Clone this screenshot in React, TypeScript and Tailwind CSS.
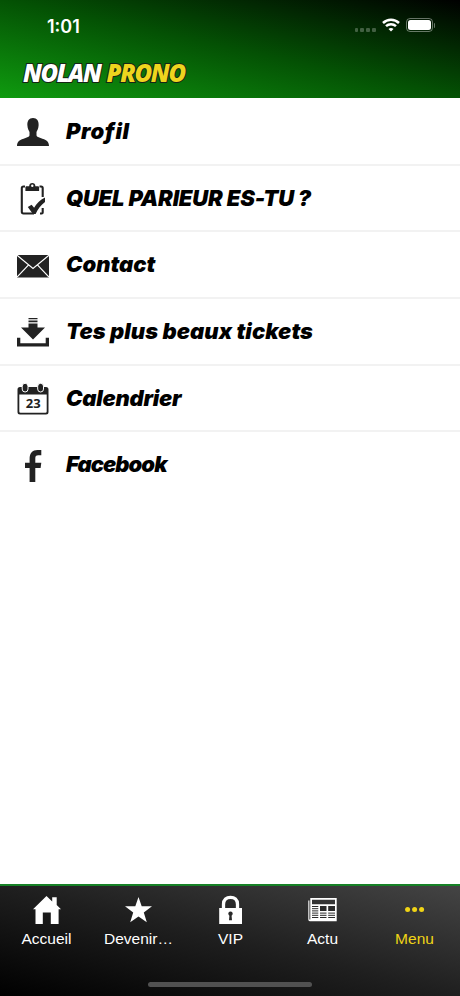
import React from 'react';

interface MenuEntry {
  label: string;
  icon: React.ReactNode;
  textClass: string;
}

interface TabEntry {
  label: string;
  icon: React.ReactNode;
  active?: boolean;
}

const menuEntries: MenuEntry[] = [
  {
    label: 'Profil',
    textClass: 'tracking-[0.6px]',
    icon: (
      <path d="M16 2c4 0 6 3 5.600 7.500-.2 3.500-1.400 5-2.100 6.500v3.200c0 1.300 1.200 1.800 4 2.700 5.300 1.700 8.500 3.100 8.500 8.100H0c0-5 3.200-6.400 8.500-8.100 2.800-.9 4-1.400 4-2.700V16c-.7-1.500-1.900-3-2.100-6.500C10 5 12 2 16 2z" />
    ),
  },
  {
    label: 'QUEL PARIEUR ES-TU ?',
    textClass: 'tracking-[-0.18px]',
    icon: (
      <>
        <path d="M8 3.500H6.500q-1.700 0-1.700 1.700v23.600q0 1.700 1.700 1.700H17M22.500 3.500H24q1.700 0 1.700 1.700V14M25.700 25v4.500q0 1-1 1H23" fill="none" stroke="currentColor" strokeWidth="2.100" />
        <path fillRule="evenodd" d="M12.200 3.200C12.200 1.200 13.500 0 15.300 0s3.100 1.200 3.100 3.200h2.500c.8 0 1.200.6 1.200 1.300V8H8.400V4.500c0-.7.400-1.300 1.200-1.300zM15.300 1.600a1.200 1.200 0 100 2.400 1.200 1.200 0 000-2.400z" />
        <path d="M10.800 24l3.800-2.200 2.500 2.900C19.500 20.300 23 16.800 28 14.400v4.500C24 22 20.800 26 18.600 31h-2.700z" />
      </>
    ),
  },
  {
    label: 'Contact',
    textClass: 'tracking-[0px]',
    icon: (
      <>
        <path d="M0 5h32v22.500H0z" />
        <path d="M0 5.300l16 13.200L32 5.300M0 27.200l11.600-12.300M32 27.200L20.400 14.900" fill="none" stroke="white" strokeWidth="1.200" />
      </>
    ),
  },
  {
    label: 'Tes plus beaux tickets',
    textClass: 'tracking-[0.04px]',
    icon: (
      <>
        <path d="M11.500 2h9v1.300h-9zM11.500 4.500h9v1.700h-9zM11.500 7.500h9v4H28L16 23.500 4 11.500h7.500z" />
        <path d="M0 21.700h3.300v5.600h25.400v-5.600H32v8.800H0z" />
      </>
    ),
  },
  {
    label: 'Calendrier',
    textClass: 'tracking-[-0.25px]',
    icon: (
      <>
        <path fillRule="evenodd" d="M3 4h26q2.500 0 2.500 2.500V29q0 2.500-2.500 2.500H3Q.5 31.500.5 29V6.500Q.5 4 3 4zM2.300 11.500V28.500q0 1.200 1.200 1.200h25q1.200 0 1.200-1.200v-17z" />
        <rect x="5.200" y=".3" width="5.800" height="8.700" rx="2.900" stroke="white" />
        <rect x="20.700" y=".3" width="5.800" height="8.700" rx="2.900" stroke="white" />
        <text x="16.200" y="25.400" textAnchor="middle" className="font-['Open_Sans'] text-[13px] font-bold">23</text>
      </>
    ),
  },
  {
    label: 'Facebook',
    textClass: 'tracking-[-0.95px]',
    icon: (
      <path d="M12.600 32V18H8v-5.200h4.600V9C12.600 3 15.500 0 20.500 0H24.300v5.200h-3c-2.300 0-3 1-3 3.200v4.400h6l-.7 5.200h-5.300v14z" />
    ),
  },
];

const tabEntries: TabEntry[] = [
  {
    label: 'Accueil',
    icon: <path d="M14.500 2L1 15.300h2.500V30h7.300V18.500h8V30h7.800V15.300H29l-4.300-4.200V3.200h-4.500v4.400z" />,
  },
  {
    label: 'Devenir…',
    icon: <path d="M14.500 3l3.200 9.200H28l-8.200 6.300 3 9.800-8.300-5.800-8.300 5.800 3-9.800L1 12.200h10.300z" />,
  },
  {
    label: 'VIP',
    icon: (
      <>
        <path d="M7.500 15V10.200C7.500 5.500 10.500 3.300 14.500 3.300s7 2.200 7 6.900V15" fill="none" stroke="currentColor" strokeWidth="3.300" />
        <path fillRule="evenodd" d="M3.200 14H26v16H3.200zM14.500 17.500a2.200 2.200 0 00-1.900 3.300l.8.900-.4 4.600h3l-.4-4.600.8-.9a2.200 2.200 0 00-1.900-3.300z" />
      </>
    ),
  },
  {
    label: 'Actu',
    icon: (
      <>
        <path fillRule="evenodd" d="M2.300 4h26.400v23.300H1.800Q.3 27.300.3 25.500V6.500h1.100v19h.9zM4 5.700v4.500h23V5.700z" />
        <path d="M4 12.500h6.300M4 14.700h6.300M4 16.900h6.300M4 19.100h6.300M4 21.300h6.300M4 23.500h6.300M12 19.100h6.500M12 21.300h6.500M12 23.500h6.500M20.200 19.100H27M20.200 21.300H27M20.200 23.500H27" stroke="#2a2a2a" strokeWidth="1" />
        <path d="M12 12h6.500v5H12zM20.200 12H27v5h-6.800z" fill="#2a2a2a" />
      </>
    ),
  },
  {
    label: 'Menu',
    active: true,
    icon: (
      <>
        <circle cx="7.600" cy="15.500" r="2.500" />
        <circle cx="14.600" cy="15.500" r="2.500" />
        <circle cx="21.600" cy="15.500" r="2.500" />
      </>
    ),
  },
];

const StatusIcons: React.FC = () => (
  <div className="flex items-center text-white">
    <div className="mt-[9px] mr-[6px] flex gap-[2px] opacity-25">
      <span className="h-1 w-[3.700px] rounded-[1px] bg-white" />
      <span className="h-1 w-[3.700px] rounded-[1px] bg-white" />
      <span className="h-1 w-[3.700px] rounded-[1px] bg-white" />
      <span className="h-1 w-[3.700px] rounded-[1px] bg-white" />
    </div>
    <svg width="18" height="14" viewBox="0 0 18 14" fill="none" stroke="currentColor" strokeWidth="2.500">
      <path d="M1 5C5.500.6 12.500.6 17 5M4 8.200c2.800-2.700 7.200-2.700 10 0" />
      <path d="M9 13.500l-2.500-2.600c1.400-1.300 3.600-1.300 5 0z" fill="currentColor" stroke="none" />
    </svg>
    <div className="ml-[6px] h-[14px] w-[27px] rounded-[4px] border border-white/40 p-px">
      <div className="h-full w-full rounded-[2.500px] bg-white" />
    </div>
    <span className="ml-px h-[5px] w-[1.500px] rounded-r bg-white/40" />
  </div>
);

export default function App() {
  return (
    <div className="flex h-[996px] w-[460px] flex-col overflow-hidden bg-white">
      <header className="h-[98px] bg-linear-to-tr/srgb from-[#0f9b0f] via-[#045204] to-black">
        <div className="flex h-[50px] items-center justify-between pr-[25px] pl-[47px]">
          <span className="mt-[2px] font-['Inter'] text-[18px] font-semibold text-white">1:01</span>
          <StatusIcons />
        </div>
        <h1 className="mt-[7px] flex gap-[6px] pl-[23px] font-['Open_Sans',sans-serif] text-[24px] leading-[32px] font-extrabold whitespace-nowrap text-white italic [-webkit-text-stroke:2px_#152515] [paint-order:stroke_fill]">
          <span className="tracking-[-1.400px]">NOLAN</span>
          <span className="tracking-[-1.300px] text-[#eed51e]">PRONO</span>
        </h1>
      </header>

      <main className="flex flex-1 flex-col pt-px">
        {menuEntries.map((entry) => (
          <div
            key={entry.label}
            className="flex h-[66.700px] items-center border-b-2 border-[#f2f2f2] pl-[17px] last:border-transparent"
          >
            <svg width="32" height="32" viewBox="0 0 32 32" fill="currentColor" className="mt-[2px] shrink-0 text-[#222]">
              {entry.icon}
            </svg>
            <span className={`ml-[17px] font-['Inter',sans-serif] text-[22px] font-black whitespace-nowrap text-black italic ${entry.textClass}`}>
              {entry.label}
            </span>
          </div>
        ))}
      </main>

      <footer className="flex h-[112px] flex-col border-t-2 border-[#168126] bg-linear-to-tr/srgb from-black via-[#1f1f1f] to-[#444]">
        <nav className="grid grid-cols-5 pt-[8px]">
          {tabEntries.map((tab) => (
            <div
              key={tab.label}
              className={`flex flex-col items-center ${tab.active ? 'text-[#f0d416]' : 'text-white'}`}
            >
              <svg width="28" height="32" viewBox="0 0 28 32" fill="currentColor" className="overflow-visible">
                {tab.icon}
              </svg>
              <span className="mt-px pl-px font-['Liberation_Sans',sans-serif] text-[15.500px] leading-[24px]">{tab.label}</span>
            </div>
          ))}
        </nav>
        <div className="mx-auto mt-auto mb-[9px] h-[5px] w-[164px] rounded-full bg-[#515151]" />
      </footer>
    </div>
  );
}
